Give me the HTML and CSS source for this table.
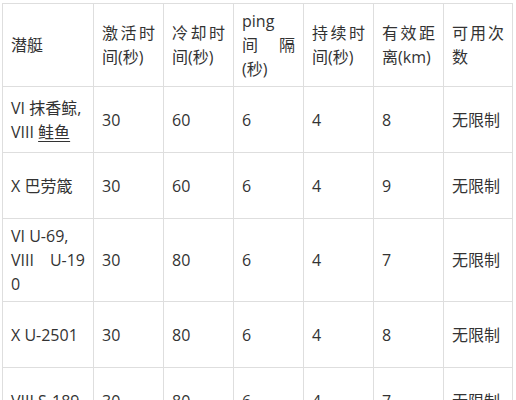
FILE: index.html
```html
<!DOCTYPE html>
<html lang="zh-CN">
<head>
<meta charset="utf-8">
<title>潜艇技能</title>
<link rel="stylesheet" href="styles.css">
</head>
<body>
<div class="page">
  <table class="sub-table">
    <colgroup>
      <col class="c-name">
      <col class="c-num">
      <col class="c-num">
      <col class="c-num">
      <col class="c-num">
      <col class="c-num">
      <col class="c-last">
    </colgroup>
    <tr class="row-tall">
      <td>潜艇</td>
      <td>激活时间(秒)</td>
      <td>冷却时间(秒)</td>
      <td>ping<br><span class="just">间隔</span>(秒)</td>
      <td>持续时间(秒)</td>
      <td>有效距离(km)</td>
      <td>可用次数</td>
    </tr>
    <tr>
      <td>VI 抹香鲸,<br>VIII <a class="link" href="#">鲑鱼</a></td>
      <td>30</td>
      <td>60</td>
      <td>6</td>
      <td>4</td>
      <td>8</td>
      <td>无限制</td>
    </tr>
    <tr>
      <td>X 巴劳箴</td>
      <td>30</td>
      <td>60</td>
      <td>6</td>
      <td>4</td>
      <td>9</td>
      <td>无限制</td>
    </tr>
    <tr class="row-tall">
      <td>VI U-69,<br><span class="just">VIII U-19</span>0</td>
      <td>30</td>
      <td>80</td>
      <td>6</td>
      <td>4</td>
      <td>7</td>
      <td>无限制</td>
    </tr>
    <tr>
      <td>X U-2501</td>
      <td>30</td>
      <td>80</td>
      <td>6</td>
      <td>4</td>
      <td>8</td>
      <td>无限制</td>
    </tr>
    <tr>
      <td>VIII S-189</td>
      <td>30</td>
      <td>80</td>
      <td>6</td>
      <td>4</td>
      <td>7</td>
      <td>无限制</td>
    </tr>
  </table>
</div>
</body>
</html>
```
FILE: styles.css
```css
html, body {
  margin: 0;
  padding: 0;
  background: #ffffff;
}

.page {
  padding: 3px 0 0 2px;
}

.sub-table {
  border-collapse: collapse;
  table-layout: fixed;
  width: 510px;
  font-family: "Open Sans", "Noto Sans CJK SC", sans-serif;
  font-size: 16px;
  line-height: 24px;
  color: #333333;
}

.c-name { width: 91px; }
.c-num { width: 70px; }
.c-last { width: 69px; }

.sub-table tr {
  height: 66px;
}

.sub-table tr.row-tall {
  height: 83px;
}

.sub-table td {
  border: 1px solid #dedede;
  padding: 5px 8px;
  vertical-align: middle;
  text-align: justify;
  word-break: break-all;
}

.just {
  display: block;
  text-align: justify;
  text-align-last: justify;
}

.link {
  color: #333333;
  text-decoration: underline;
  text-underline-offset: 3px;
}
```
